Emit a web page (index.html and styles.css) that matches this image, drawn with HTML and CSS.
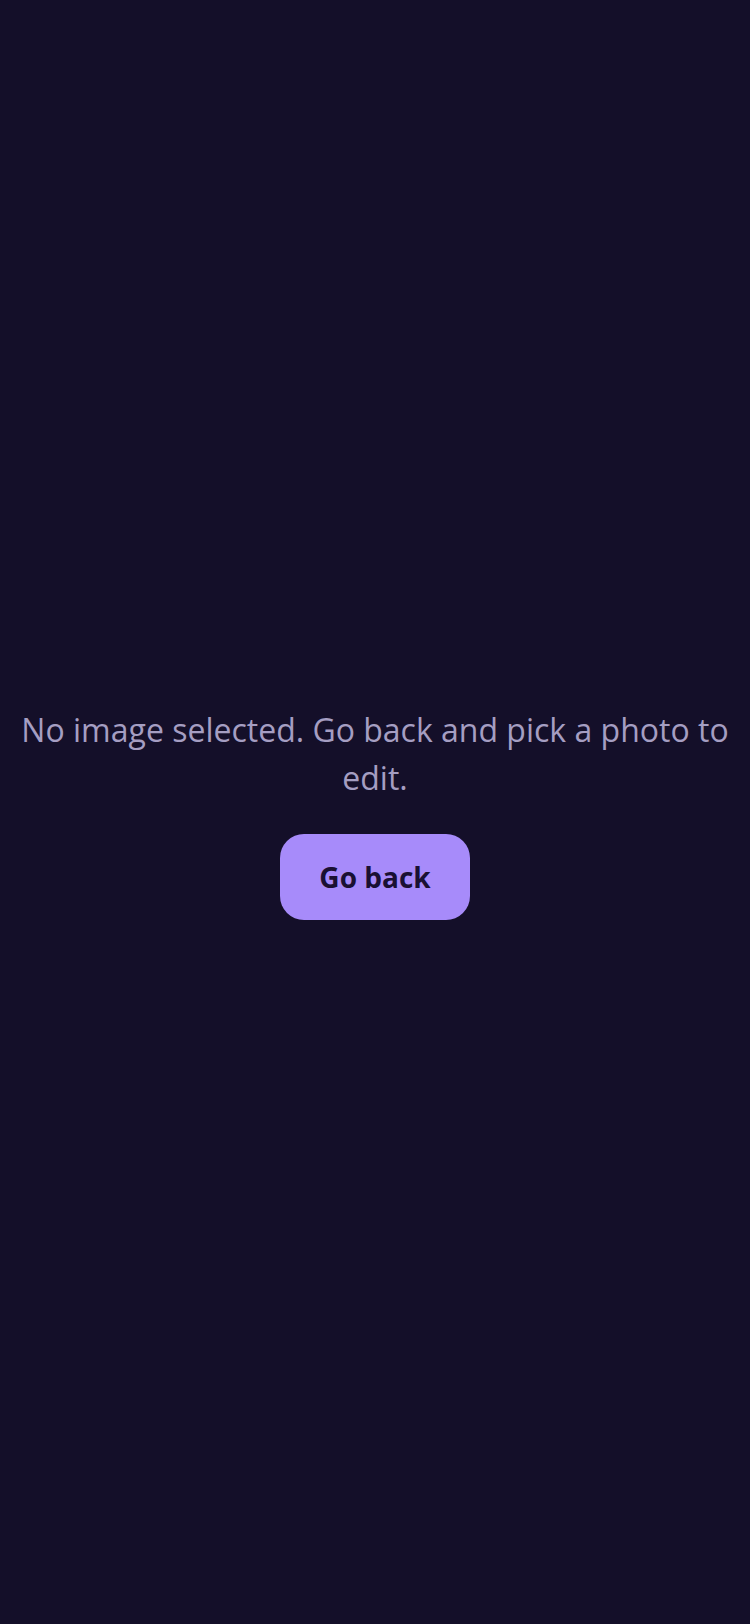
FILE: index.html
```html
<!DOCTYPE html>
<html lang="en">
<head>
<meta charset="utf-8">
<meta name="viewport" content="width=750">
<title>Edit photo</title>
<link rel="stylesheet" href="styles.css">
</head>
<body>
<main class="screen">
  <div class="empty">
    <p class="empty-text">No image selected. Go back and pick a photo to edit.</p>
    <button class="back-btn" type="button">Go back</button>
  </div>
</main>
</body>
</html>
```

FILE: styles.css
```css
html, body {
  margin: 0;
  padding: 0;
  background: #140f29;
}
body {
  font-family: "Open Sans", "Noto Sans", sans-serif;
}
.screen {
  min-height: 1624px;
  display: flex;
  align-items: center;
  justify-content: center;
  padding: 2px 20px 0;
  box-sizing: border-box;
}
.empty {
  display: flex;
  flex-direction: column;
  align-items: center;
  gap: 32px;
}
.empty-text {
  margin: 0;
  font-size: 32px;
  line-height: 48px;
  color: #a59ec2;
  text-align: center;
}
.back-btn {
  font-family: inherit;
  font-size: 28px;
  font-weight: 700;
  line-height: 42px;
  color: #1a1033;
  background: #a78bfa;
  border: none;
  border-radius: 24px;
  padding: 22px 39px;
}
```
